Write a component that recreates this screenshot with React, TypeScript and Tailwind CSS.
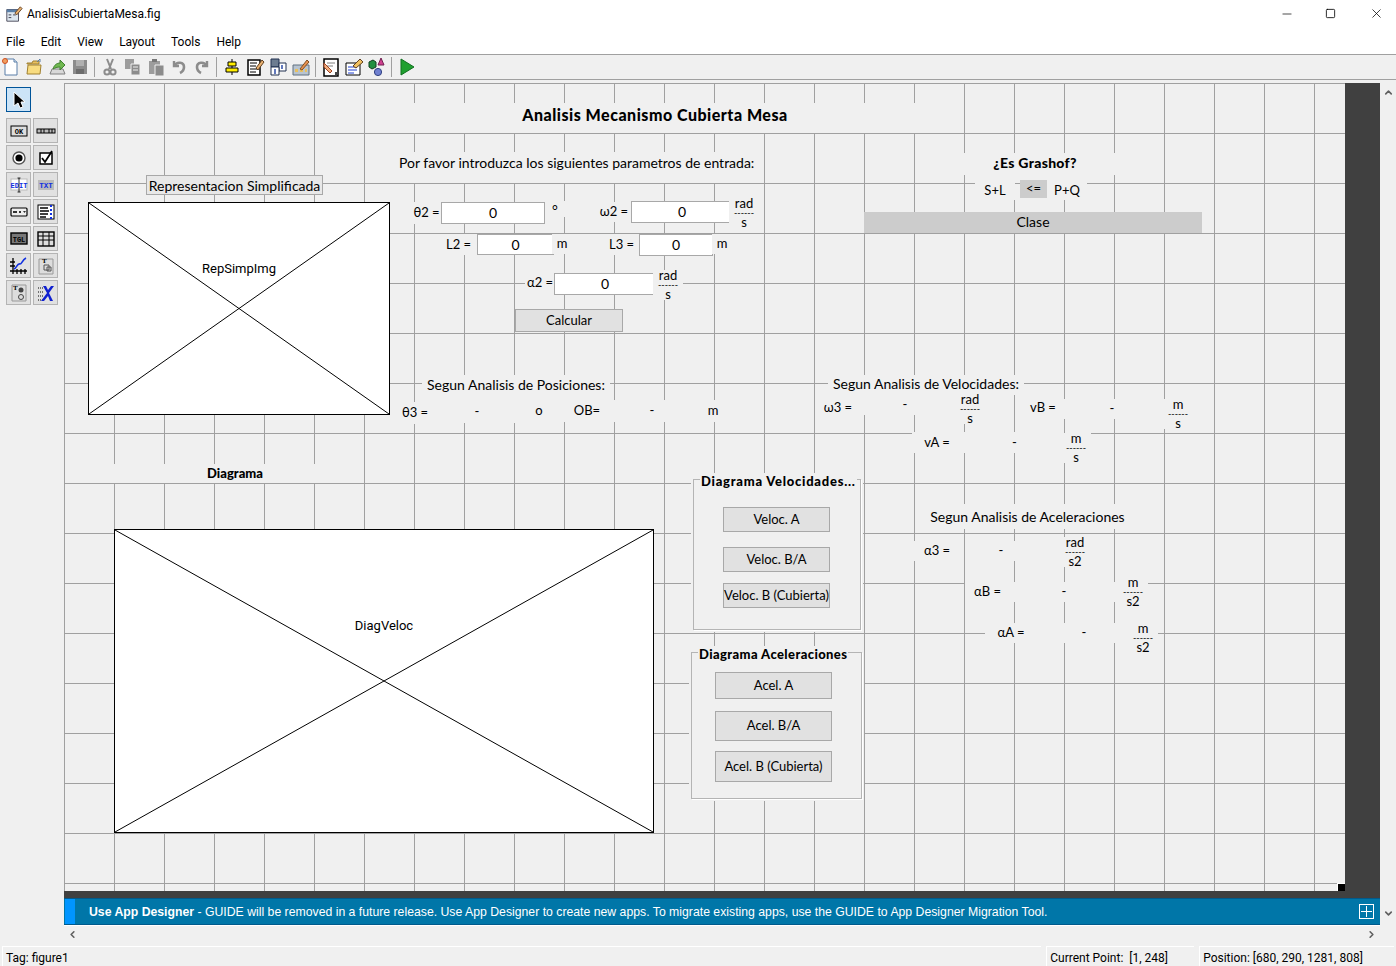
import type { ReactNode } from 'react'
import { Minus, Square, X, ChevronUp, ChevronDown, ChevronLeft, ChevronRight } from 'lucide-react'
import clsx from 'clsx'
import { twMerge } from 'tailwind-merge'

const uiFont = 'font-["Roboto",sans-serif]'
const canvasFont = 'font-["Lato",sans-serif]'

function Ico({ children, size = 20 }: { children: ReactNode; size?: number }) {
  return (
    <svg width={size} height={size} viewBox="0 0 20 20" className="shrink-0">
      {children}
    </svg>
  )
}

const toolbarLeft = [
  <Ico key="new"><path d="M4 2h9l3 3v13H4z" fill="#fff" stroke="#5a7fa8" /><path d="M13 2v3h3" fill="#dce8f4" stroke="#5a7fa8" /><circle cx="4" cy="4" r="2.5" fill="#f0a060" stroke="#d05020" /></Ico>,
  <Ico key="open"><path d="M3 6h5l1-2h6v3H3z" fill="#e8c060" stroke="#a08030" /><path d="M3 17l1-9h13l-1 9z" fill="#f8dc80" stroke="#a08030" /><path d="M13 5l3-3v3" fill="none" stroke="#5a7fa8" /></Ico>,
  <Ico key="load"><path d="M3 17l2-5h11l2 5z" fill="#d8d8d8" stroke="#808080" /><path d="M6 12c1-4 4-6 7-6V3l5 5-5 5v-3c-3 0-5 1-7 2z" fill="#70b850" stroke="#408030" /></Ico>,
  <Ico key="save"><path d="M3 3h14v14H3z" fill="#8c8c8c" /><path d="M6 3h8v6H6z" fill="#b0b0b0" /><path d="M6 12h8v5H6z" fill="#6c6c6c" /></Ico>,
]

const toolbarEdit = [
  <Ico key="cut"><path d="M7 2l4 10M13 2L9 12" stroke="#8c8c8c" strokeWidth="2" /><circle cx="7" cy="15" r="2.6" fill="none" stroke="#8c8c8c" strokeWidth="2" /><circle cx="13" cy="15" r="2.6" fill="none" stroke="#8c8c8c" strokeWidth="2" /></Ico>,
  <Ico key="copy"><path d="M2 2h9v10H2z" fill="#9c9c9c" /><path d="M8 7h9v11H8z" fill="#8c8c8c" stroke="#efefef" /><path d="M10 10h5M10 13h5" stroke="#efefef" /></Ico>,
  <Ico key="paste"><path d="M3 4h11v13H3z" fill="#9c9c9c" /><path d="M6 2h5v3H6z" fill="#777" /><path d="M9 8h9v11H9z" fill="#8c8c8c" stroke="#efefef" /></Ico>,
  <Ico key="undo"><path d="M5 4v5h5" fill="none" stroke="#8c8c8c" strokeWidth="2.4" /><path d="M5 9c3-5 10-4 10 1 0 3-2 5-4 6" fill="none" stroke="#8c8c8c" strokeWidth="2.6" /></Ico>,
  <Ico key="redo"><path d="M15 4v5h-5" fill="none" stroke="#8c8c8c" strokeWidth="2.4" /><path d="M15 9c-3-5-10-4-10 1 0 3 2 5 4 6" fill="none" stroke="#8c8c8c" strokeWidth="2.6" /></Ico>,
]

const toolbarTools = [
  <Ico key="align"><path d="M10 2v16" stroke="#000" /><path d="M6 5h8v4H6zM4 11h12v4H4z" fill="#ffee00" stroke="#000" /></Ico>,
  <Ico key="menu"><path d="M3 3h12v15H3z" fill="#fff" stroke="#000" strokeWidth="1.5" /><path d="M5 6h7M5 9h6M5 12h7M5 15h6" stroke="#000" /><path d="M11 11l6-8 2 2-6 8z" fill="#e8b070" stroke="#604020" /></Ico>,
  <Ico key="tab"><path d="M3 2h8v8H3z" fill="#6c7c90" stroke="#203050" /><path d="M11 6h7v8h-7z" fill="#fff" stroke="#203050" /><path d="M3 10h8v8H3z" fill="#fff" stroke="#203050" /><path d="M7 12v5M14 8v4" stroke="#2040a0" strokeWidth="1.4" /></Ico>,
  <Ico key="tb"><path d="M2 8h16v10H2z" fill="#b8c4d0" stroke="#607080" /><path d="M4 12h3v3H4zM9 12h3v3H9zM14 12h2v3h-2z" fill="#e8c060" /><path d="M9 12l7-9 2 2-7 8z" fill="#e89050" stroke="#805020" /></Ico>,
]

const toolbarEditors = [
  <Ico key="mfile"><path d="M3 2h14v17H3z" fill="#fff" stroke="#000" strokeWidth="1.5" /><path d="M6 6h8M6 9h6" stroke="#808080" /><path d="M3 6l8 8-2 2-6-6z" fill="#f0b080" stroke="#a04020" /><path d="M14 15h3v3h-3z" fill="#444" /></Ico>,
  <Ico key="insp"><path d="M2 6h14v12H2z" fill="#fff" stroke="#000" /><path d="M4 10h8M4 13h9M4 16h6" stroke="#2040d0" /><path d="M9 9l7-7 3 3-7 6z" fill="#f0c060" stroke="#604020" /></Ico>,
  <Ico key="browser"><path d="M2 5l4-2 3 2v5l-4 2-3-2z" fill="#209040" stroke="#104020" /><path d="M14 1l3 7h-6z" fill="#d04090" stroke="#702050" /><circle cx="11" cy="15" r="3.6" fill="#7080d0" stroke="#304080" /></Ico>,
]

const palette = [
  <Ico key="ok"><rect x="2" y="5" width="16" height="10" fill="#ddd" stroke="#000" /><text x="10" y="13" textAnchor="middle" fontSize="7" fontWeight="700" fontFamily="Liberation Mono">OK</text></Ico>,
  <Ico key="slider"><rect x="1" y="8" width="18" height="4" fill="#bbb" stroke="#000" /><path d="M5 8v4M8 8v4M13 8v4M16 8v4" stroke="#000" /></Ico>,
  <Ico key="radio"><circle cx="10" cy="10" r="6" fill="#fff" stroke="#555" strokeWidth="1.4" /><circle cx="10" cy="10" r="3.600" fill="#000" /></Ico>,
  <Ico key="check"><rect x="4" y="5" width="12" height="11" fill="#fff" stroke="#000" strokeWidth="1.5" /><path d="M6 10l3 4 7-11" fill="none" stroke="#000" strokeWidth="1.8" /></Ico>,
  <Ico key="edit"><rect x="2" y="4" width="16" height="11" fill="#fff" stroke="#bbb" /><text x="10" y="12.500" textAnchor="middle" fontSize="7" fontWeight="700" fill="#1030e0" fontFamily="Liberation Mono">EDIT</text><path d="M10 3v14M8.500 3h3M8.500 17h3" stroke="#000" strokeWidth="0.8" /></Ico>,
  <Ico key="txt"><rect x="2" y="5" width="16" height="10" fill="#bbb" /><text x="10" y="13" textAnchor="middle" fontSize="7.5" fontWeight="700" fill="#1030e0" fontFamily="Liberation Mono">TXT</text></Ico>,
  <Ico key="popup"><rect x="2" y="6" width="16" height="8" rx="1" fill="#eee" stroke="#000" strokeWidth="1.2" /><path d="M4 9h4v2H4zM10 9h2v2h-2zM14 9h3l-1.500 2z" fill="#333" /></Ico>,
  <Ico key="list"><rect x="2" y="3" width="16" height="14" fill="#fff" stroke="#000" /><path d="M4 6h8M4 9h9M4 12h8M4 15h6" stroke="#000" strokeWidth="1.3" /><path d="M15 3v14" stroke="#1030e0" strokeDasharray="2 2" strokeWidth="2" /></Ico>,
  <Ico key="tgl"><rect x="2" y="4" width="16" height="11" fill="#777" stroke="#000" strokeWidth="1.4" /><text x="10" y="12.500" textAnchor="middle" fontSize="7" fontWeight="700" fontFamily="Liberation Mono">TGL</text></Ico>,
  <Ico key="table"><rect x="2" y="3" width="16" height="14" fill="#ddd" stroke="#000" strokeWidth="1.4" /><path d="M2 7h16M2 11h16M7 3v14M13 3v14" stroke="#000" /></Ico>,
  <Ico key="axes"><path d="M4 2v16M1 15h17M1 6h5M1 10h5M8 13v5M12 13v5M16 13v5" stroke="#000" strokeWidth="1.3" /><path d="M5 13c3-1 3-6 6-5 2 0 2-4 6-6" fill="none" stroke="#1030e0" strokeWidth="1.6" /></Ico>,
  <Ico key="panel"><path d="M3 3h14v15H3z" fill="#ddd" stroke="#999" /><text x="6" y="7" fontSize="7" fontWeight="700" fontFamily="Liberation Serif">T</text><path d="M8 9h5v5H8zM11 11h4v4h-4z" fill="none" stroke="#555" /></Ico>,
  <Ico key="btngrp"><path d="M3 2h14v16H3z" fill="#ddd" stroke="#999" /><text x="4" y="7" fontSize="7" fontWeight="700" fontFamily="Liberation Serif">T</text><circle cx="12" cy="7" r="2.500" fill="#444" /><circle cx="12" cy="14" r="2.500" fill="#ddd" stroke="#444" /></Ico>,
  <Ico key="activex"><path d="M2 5h5M2 9h5M2 13h5M2 17h5" stroke="#000" strokeDasharray="1 1" /><path d="M7 3h3l2 4 3-4h3l-5 7 4 8h-3l-2-5-4 5H5l6-8z" fill="#1020d0" /></Ico>,
]

function Frac({ top, bottom, className }: { top: string; bottom: string; className: string }) {
  return (
    <div className={clsx('absolute flex w-[30px] flex-col items-center bg-[#f0f0f0] text-[13px]', className)}>
      <span className="h-[10px] leading-[10px]">{top}</span>
      <span className="h-[9px] text-[9px] leading-[9px]">------</span>
      <span className="h-[11px] leading-[11px]">{bottom}</span>
    </div>
  )
}

function Lbl({ className, children }: { className: string; children: ReactNode }) {
  return (
    <div className={twMerge('absolute flex items-center justify-center whitespace-nowrap bg-[#f0f0f0] text-[13px]', className)}>
      {children}
    </div>
  )
}

function Field({ className }: { className: string }) {
  return (
    <div className={clsx('absolute flex items-center justify-center border border-[#a8a8a8] bg-white pb-px text-[14px]', className)}>
      0
    </div>
  )
}

function Axes({ className, name, labelClass }: { className: string; name: string; labelClass: string }) {
  return (
    <div className={clsx('absolute border border-black bg-white', className)}>
      <svg width="100%" height="100%" className="absolute inset-0">
        <line x1="0" y1="0" x2="100%" y2="100%" stroke="#000" />
        <line x1="100%" y1="0" x2="0" y2="100%" stroke="#000" />
      </svg>
      <span className={clsx(uiFont, 'absolute left-1/2 -translate-x-1/2 text-[13px]', labelClass)}>{name}</span>
    </div>
  )
}

function PanelBtn({ className, children }: { className: string; children: ReactNode }) {
  return (
    <div className={clsx('flex items-center justify-center whitespace-nowrap border border-[#a8a8a8] bg-[#e1e1e1] text-[13px]', className)}>
      {children}
    </div>
  )
}

export default function App() {
  return (
    <div className={clsx(uiFont, 'flex h-[966px] w-[1396px] flex-col overflow-hidden bg-[#f0f0f0] text-black')}>
      <div className="flex h-[27px] items-center bg-white pl-[5px] text-[12px]">
        <Ico size={18}>
          <path d="M2 5h13v13H2z" fill="#dde6ef" stroke="#445" />
          <path d="M2 5h13v3H2z" fill="#5a7fa8" />
          <path d="M4 11h3M4 14h3M9 11h3" stroke="#334" />
          <path d="M11 9l6-7 2 2-6 7z" fill="#e8b070" stroke="#604020" />
        </Ico>
        <span className="ml-[4px]">AnalisisCubiertaMesa.fig</span>
        <div className="ml-auto flex items-center">
          <Minus className="mr-[31px] h-[14px] w-[14px]" strokeWidth={1.2} />
          <Square className="mr-[33px] h-[11px] w-[11px]" strokeWidth={1.8} />
          <X className="mr-[12px] h-[15px] w-[15px]" strokeWidth={1.2} />
        </div>
      </div>

      <div className="flex h-[28px] items-center gap-[16px] border-b border-[#a0a0a0] bg-white pl-[6px] pt-[2px] text-[12px]">
        {['File', 'Edit', 'View', 'Layout', 'Tools', 'Help'].map((m) => (
          <span key={m}>{m}</span>
        ))}
      </div>

      <div className="flex h-[25px] items-center border-b border-[#a0a0a0] pl-0">
        <div className="-ml-px flex items-center">
          {toolbarLeft.map((icon, i) => <div key={i} className="flex w-[23px] justify-center">{icon}</div>)}
          <div className="mx-[3px] h-[20px] w-px bg-[#a0a0a0]" />
          {toolbarEdit.map((icon, i) => <div key={i} className="flex w-[23px] justify-center">{icon}</div>)}
          <div className="mx-[3px] h-[20px] w-px bg-[#a0a0a0]" />
          {toolbarTools.map((icon, i) => <div key={i} className="flex w-[23px] justify-center">{icon}</div>)}
          <div className="mx-[3px] h-[20px] w-px bg-[#a0a0a0]" />
          {toolbarEditors.map((icon, i) => <div key={i} className="flex w-[23px] justify-center">{icon}</div>)}
          <div className="mx-[3px] h-[20px] w-px bg-[#a0a0a0]" />
          <div className="flex w-[23px] justify-center">
            <Ico><path d="M4 2l13 8-13 8z" fill="#20a030" stroke="#107020" /></Ico>
          </div>
        </div>
      </div>

      <div className="flex min-h-0 flex-1">
        <aside className="w-[64px] shrink-0 pl-[6px] pt-[7px]">
          <div className="flex h-[25px] w-[25px] items-center justify-center border border-[#005499] bg-[#cce4f7]">
            <svg width="16" height="18" viewBox="0 0 16 18">
              <path d="M3 1v14l4-3 2 5 3-1-2-5h4z" fill="#000" stroke="#fff" />
            </svg>
          </div>
          <div className="mt-[6px] grid w-[52px] grid-cols-[25px_25px] gap-[2px]">
            {palette.map((icon, i) => (
              <div key={i} className="flex h-[25px] w-[25px] items-center justify-center border border-[#b4b4b4] bg-[#e1e1e1]">
                {icon}
              </div>
            ))}
          </div>
        </aside>

        <div className="flex w-[1316px] shrink-0 flex-col pt-[3px]">
          <div className="flex h-[808px] shrink-0">
            <main
              className={clsx(
                canvasFont,
                'relative h-[808px] w-[1281px] shrink-0 overflow-hidden bg-[#f0f0f0] bg-[linear-gradient(to_right,#a0a0a0_1px,transparent_1px),linear-gradient(to_bottom,#a0a0a0_1px,transparent_1px)] bg-[size:50px_50px]'
              )}
            >
              <Lbl className="left-[331px] top-[20px] h-[30px] w-[520px] pb-[6px] text-[16px] font-black tracking-[0.5px]">Analisis  Mecanismo  Cubierta  Mesa</Lbl>
              <Lbl className="left-[331px] top-[69px] h-[31px] w-[369px] justify-start pb-[11px] pl-[4px] text-[14px]">Por favor introduzca los siguientes parametros de entrada:</Lbl>

              <Lbl className="left-[82px] top-[92px] h-[20px] w-[177px] border border-[#a8a8a8] bg-[#e8e8e8] text-[14px]">Representacion Simplificada</Lbl>
              <Axes className="left-[24px] top-[119px] h-[213px] w-[302px]" name="RepSimpImg" labelClass="top-[56px]" />

              <Lbl className="left-[348px] top-[119px] h-[22px] w-[29px]">θ2 =</Lbl>
              <Field className="left-[377px] top-[119px] h-[22px] w-[104px]" />
              <Lbl className="left-[481px] top-[118px] h-[16px] w-[20px] text-[14px]">°</Lbl>
              <Lbl className="left-[533px] top-[119px] h-[20px] w-[34px]">ω2 =</Lbl>
              <Field className="left-[567px] top-[118px] h-[22px] w-[102px]" />
              <Frac className="left-[665px] top-[115px]" top="rad" bottom="s" />

              <Lbl className="left-[378px] top-[151px] h-[21px] w-[33px]">L2 =</Lbl>
              <Field className="left-[413px] top-[151px] h-[21px] w-[77px]" />
              <Lbl className="left-[488px] top-[151px] h-[20px] w-[20px]">m</Lbl>
              <Lbl className="left-[542px] top-[151px] h-[21px] w-[31px]">L3 =</Lbl>
              <Field className="left-[575px] top-[151px] h-[22px] w-[74px]" />
              <Lbl className="left-[648px] top-[151px] h-[20px] w-[20px]">m</Lbl>

              <Lbl className="left-[461px] top-[189px] h-[21px] w-[30px]">α2 =</Lbl>
              <Field className="left-[490px] top-[190px] h-[22px] w-[102px]" />
              <Frac className="left-[589px] top-[187px]" top="rad" bottom="s" />
              <PanelBtn className="absolute left-[451px] top-[226px] h-[23px] w-[108px]">Calcular</PanelBtn>

              <Lbl className="left-[358px] top-[292px] h-[27px] w-[188px] pb-[8px] text-[14px]">Segun Analisis de Posiciones:</Lbl>
              <Lbl className="left-[333px] top-[319px] h-[22px] w-[36px]">θ3 =</Lbl>
              <Lbl className="left-[374px] top-[318px] h-[22px] w-[78px]">-</Lbl>
              <Lbl className="left-[458px] top-[317px] h-[22px] w-[34px]">o</Lbl>
              <Lbl className="left-[500px] top-[317px] h-[22px] w-[46px]">OB=</Lbl>
              <Lbl className="left-[546px] top-[317px] h-[22px] w-[84px]">-</Lbl>
              <Lbl className="left-[632px] top-[317px] h-[22px] w-[34px]">m</Lbl>

              <Lbl className="left-[886px] top-[70px] h-[22px] w-[170px] pb-[4px] text-[14px] font-black tracking-[0.3px]">¿Es Grashof?</Lbl>
              <Lbl className="left-[911px] top-[92px] h-[25px] w-[40px] pt-[7px]">S+L</Lbl>
              <Lbl className="left-[956px] top-[97px] h-[18px] w-[27px] bg-[#cccccc]">&lt;=</Lbl>
              <Lbl className="left-[983px] top-[92px] h-[25px] w-[40px] pt-[6px]">P+Q</Lbl>
              <Lbl className="left-[800px] top-[129px] h-[21px] w-[338px] bg-[#cccccc] pb-[2px] text-[14px]">Clase</Lbl>

              <Lbl className="left-[764px] top-[292px] h-[20px] w-[196px] pb-[3px] text-[14px]">Segun Analisis de Velocidades:</Lbl>
              <Lbl className="left-[752px] top-[315px] h-[20px] w-[44px]">ω3 =</Lbl>
              <Lbl className="left-[796px] top-[312px] h-[20px] w-[90px]">-</Lbl>
              <Frac className="left-[891px] top-[311px]" top="rad" bottom="s" />
              <Lbl className="left-[961px] top-[315px] h-[20px] w-[36px]">vB =</Lbl>
              <Lbl className="left-[996px] top-[316px] h-[20px] w-[104px]">-</Lbl>
              <Frac className="left-[1099px] top-[316px]" top="m" bottom="s" />
              <Lbl className="left-[848px] top-[349px] h-[21px] w-[50px]">vA =</Lbl>
              <Lbl className="left-[898px] top-[349px] h-[21px] w-[99px] pl-[6px]">-</Lbl>
              <Frac className="left-[997px] top-[350px]" top="m" bottom="s" />

              <Lbl className="left-[861px] top-[421px] h-[25px] w-[205px] text-[14px]">Segun Analisis de Aceleraciones</Lbl>
              <Lbl className="left-[848px] top-[458px] h-[20px] w-[50px]">α3 =</Lbl>
              <Lbl className="left-[901px] top-[458px] h-[20px] w-[72px]">-</Lbl>
              <Frac className="left-[996px] top-[454px]" top="rad" bottom="s2" />
              <Lbl className="left-[901px] top-[499px] h-[20px] w-[45px]">αB =</Lbl>
              <Lbl className="left-[946px] top-[499px] h-[20px] w-[108px]">-</Lbl>
              <Frac className="left-[1054px] top-[494px]" top="m" bottom="s2" />
              <Lbl className="left-[921px] top-[540px] h-[20px] w-[52px]">αA =</Lbl>
              <Lbl className="left-[973px] top-[540px] h-[20px] w-[91px] pl-[3px]">-</Lbl>
              <Frac className="left-[1064px] top-[540px]" top="m" bottom="s2" />

              <Lbl className="left-[50px] top-[381px] h-[19px] w-[242px] pt-[1px] text-[13px] font-black">Diagrama</Lbl>
              <Axes className="left-[50px] top-[446px] h-[304px] w-[540px]" name="DiagVeloc" labelClass="top-[86px]" />

              <section className="absolute left-[629px] top-[396px] flex h-[151px] w-[168px] flex-col items-start border border-[#b4b4b4] bg-[#f0f0f0] pl-[29px] pt-[27px] shadow-[1px_1px_0_#fff,0_0_0_2px_#f0f0f0]">
                <span className="absolute left-[6px] top-[-7px] whitespace-nowrap bg-[#f0f0f0] px-px text-[13px] font-black leading-[16px] tracking-[0.75px]">Diagrama  Velocidades...</span>
                <PanelBtn className="h-[25px] w-[107px]">Veloc. A</PanelBtn>
                <PanelBtn className="mt-[15px] h-[25px] w-[107px]">Veloc. B/A</PanelBtn>
                <PanelBtn className="mt-[11px] h-[25px] w-[107px]">Veloc. B (Cubierta)</PanelBtn>
              </section>

              <section className="absolute left-[627px] top-[569px] flex h-[147px] w-[171px] flex-col items-start border border-[#b4b4b4] bg-[#f0f0f0] pl-[23px] pt-[19px] shadow-[1px_1px_0_#fff,0_0_0_2px_#f0f0f0]">
                <span className="absolute left-[6px] top-[-7px] whitespace-nowrap bg-[#f0f0f0] px-px text-[13px] font-black leading-[16px] tracking-[0.4px]">Diagrama  Aceleraciones</span>
                <PanelBtn className="h-[27px] w-[117px]">Acel. A</PanelBtn>
                <PanelBtn className="mt-[12px] h-[30px] w-[117px]">Acel. B/A</PanelBtn>
                <PanelBtn className="mt-[10px] h-[31px] w-[117px]">Acel. B (Cubierta)</PanelBtn>
              </section>

              <div className="absolute bottom-0 right-0 h-[8px] w-[8px] border-l border-t border-white bg-black" />
            </main>
            <div className="flex-1 bg-[#404040]" />
          </div>

          <div className="h-[7px] shrink-0 bg-[#404040]" />

          <div className='flex h-[27px] shrink-0 items-center border-y border-[#005a8c] bg-[#0076a8] pl-px font-["Liberation_Sans",sans-serif] text-[12.25px] text-white'>
            <div className="h-full w-[10px] bg-[#0095ff]" />
            <span className="ml-[14px] pt-px">
              <b>Use App Designer</b> - GUIDE will be removed in a future release. Use App Designer to create new apps. To migrate existing apps, use the GUIDE to App Designer Migration Tool.
            </span>
            <div className="ml-auto mr-[6px] flex h-[15px] w-[15px] items-center justify-center border border-white">
              <svg width="11" height="11" viewBox="0 0 11 11"><path d="M5.500 0v11M0 5.500h11" stroke="#fff" /></svg>
            </div>
          </div>

          <div className="flex h-[17px] shrink-0 items-center justify-between border-t border-white pl-[3px] pr-[3px] text-[#606060]">
            <ChevronLeft className="h-[11px] w-[11px]" strokeWidth={3.5} />
            <ChevronRight className="h-[11px] w-[11px]" strokeWidth={3.5} />
          </div>
        </div>

        <div className="flex h-[845px] flex-1 flex-col items-center justify-between pb-[6px] pt-[7px] text-[#606060]">
          <ChevronUp className="h-[11px] w-[11px]" strokeWidth={3.5} />
          <ChevronDown className="h-[11px] w-[11px]" strokeWidth={3.5} />
        </div>
      </div>

      <div className="flex h-[20px] shrink-0 gap-[5px] px-[2px] text-[12px] leading-[18px]">
        <div className="w-[1040px] border-l border-t border-white pl-[3px] pt-[2px]">Tag: figure1</div>
        <div className="w-[148px] border-l border-t border-white pl-[3px] pt-[2px]">Current Point:&nbsp; [1, 248]</div>
        <div className="w-[195px] border-l border-t border-white pl-[3px] pt-[2px]">Position: [680, 290, 1281, 808]</div>
      </div>
    </div>
  )
}
